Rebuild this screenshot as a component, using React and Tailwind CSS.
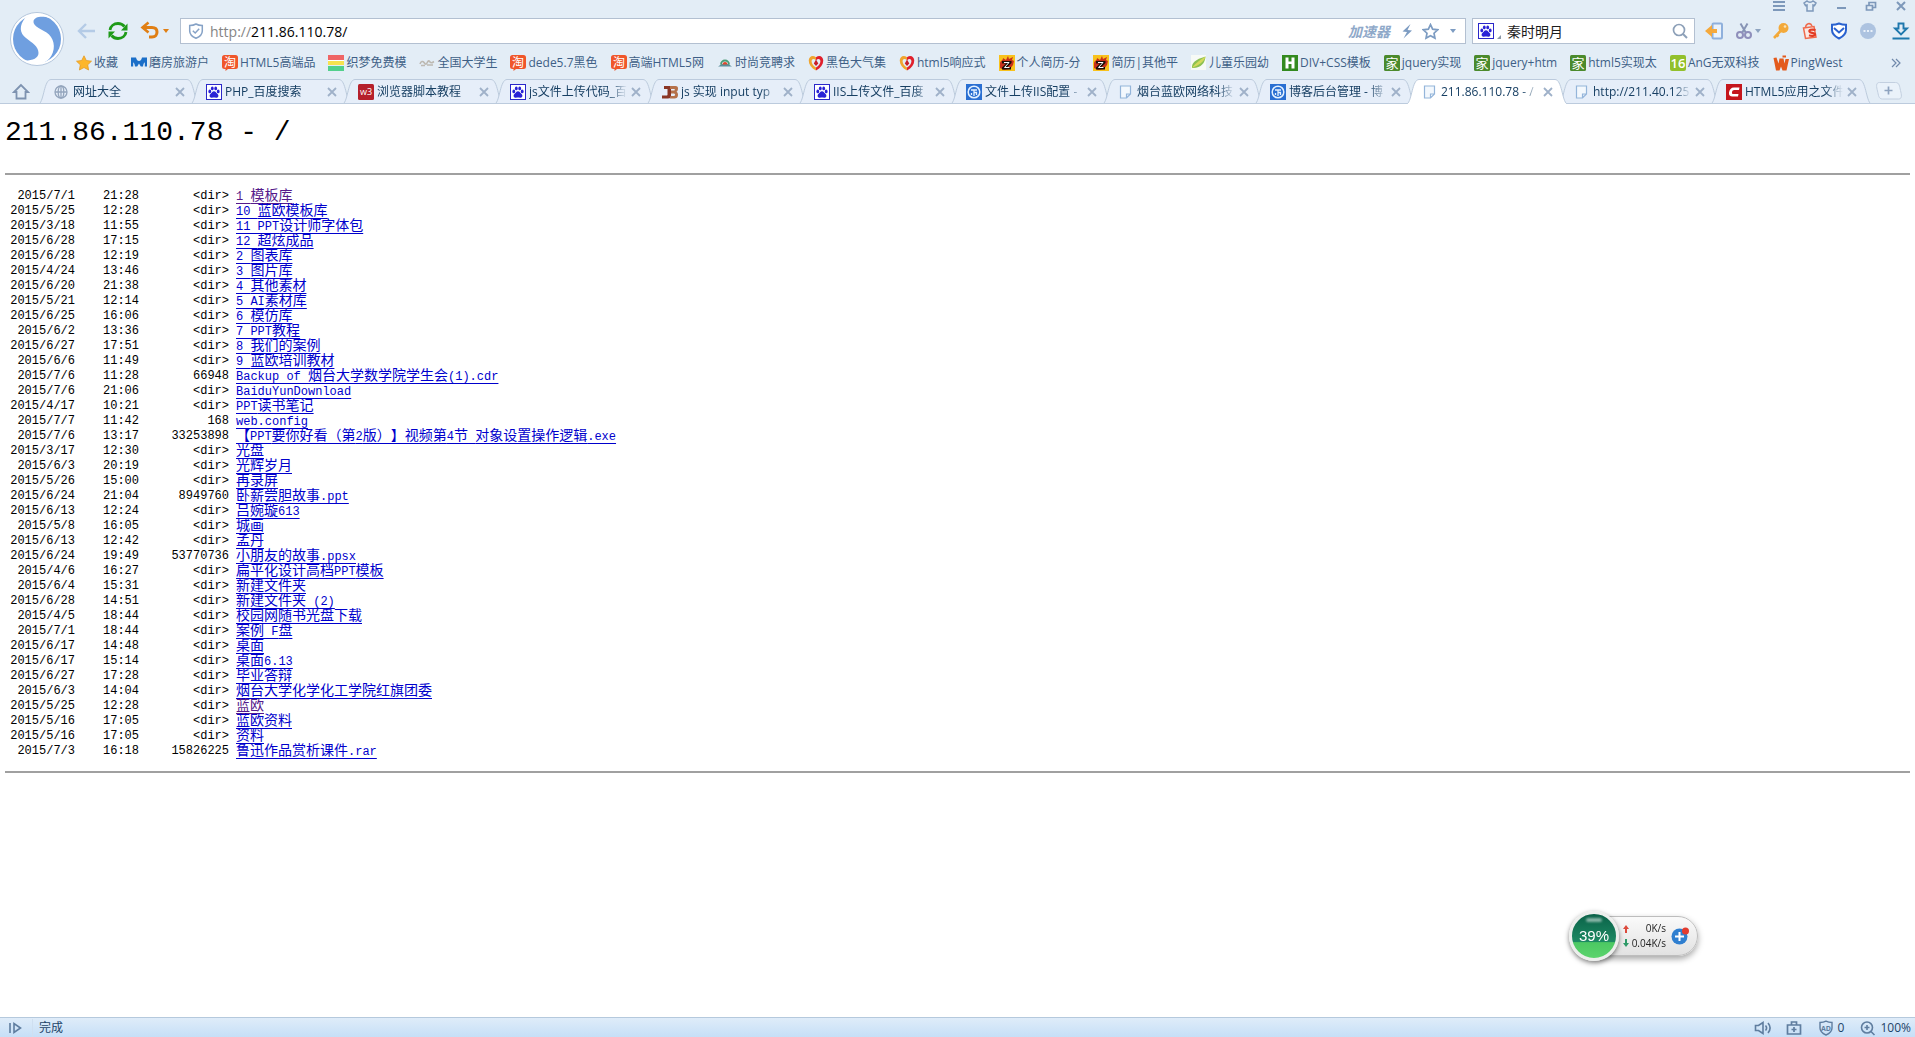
import clsx from 'clsx'

const BOOKMARKS = [
  { icon: 'star', label: '收藏' },
  { icon: 'mofang', label: '磨房旅游户' },
  { icon: 'tao', label: 'HTML5高端品' },
  { icon: 'rainbow', label: '织梦免费模' },
  { icon: 'grey', label: '全国大学生' },
  { icon: 'tao', label: 'dede5.7黑色' },
  { icon: 'tao', label: '高端HTML5网' },
  { icon: 'hat', label: '时尚竞聘求' },
  { icon: 'heart', label: '黑色大气集' },
  { icon: 'heart', label: 'html5响应式' },
  { icon: 'flame', label: '个人简历-分' },
  { icon: 'flame', label: '简历|其他平' },
  { icon: 'leaf', label: '儿童乐园幼' },
  { icon: 'h', label: 'DIV+CSS模板' },
  { icon: 'jia', label: 'jquery实现' },
  { icon: 'jia', label: 'jquery+htm' },
  { icon: 'jia', label: 'html5实现太' },
  { icon: 'sixteen', label: 'AnG无双科技' },
  { icon: 'ping', label: 'PingWest' },
]

const TABS = [
  { icon: 'globe', label: '网址大全' },
  { icon: 'paw', label: 'PHP_百度搜索' },
  { icon: 'w3', label: '浏览器脚本教程' },
  { icon: 'paw', label: 'js文件上传代码_百' },
  { icon: 'jb', label: 'js 实现 input typ' },
  { icon: 'paw', label: 'IIS上传文件_百度' },
  { icon: 'blog', label: '文件上传IIS配置 -' },
  { icon: 'page', label: '烟台蓝欧网络科技' },
  { icon: 'blog', label: '博客后台管理 - 博' },
  { icon: 'page', label: '211.86.110.78 - /', active: true },
  { icon: 'page', label: 'http://211.40.125' },
  { icon: 'c', label: 'HTML5应用之文件' },
]

// date, time, size, name, visited
const FILES = [
  ['2015/7/1', '21:28', '<dir>', '1 模板库', true],
  ['2015/5/25', '12:28', '<dir>', '10 蓝欧模板库'],
  ['2015/3/18', '11:55', '<dir>', '11 PPT设计师字体包'],
  ['2015/6/28', '17:15', '<dir>', '12 超炫成品'],
  ['2015/6/28', '12:19', '<dir>', '2 图表库'],
  ['2015/4/24', '13:46', '<dir>', '3 图片库'],
  ['2015/6/20', '21:38', '<dir>', '4 其他素材'],
  ['2015/5/21', '12:14', '<dir>', '5 AI素材库'],
  ['2015/6/25', '16:06', '<dir>', '6 模仿库'],
  ['2015/6/2', '13:36', '<dir>', '7 PPT教程'],
  ['2015/6/27', '17:51', '<dir>', '8 我们的案例'],
  ['2015/6/6', '11:49', '<dir>', '9 蓝欧培训教材'],
  ['2015/7/6', '11:28', '66948', 'Backup of 烟台大学数学院学生会(1).cdr'],
  ['2015/7/6', '21:06', '<dir>', 'BaiduYunDownload'],
  ['2015/4/17', '10:21', '<dir>', 'PPT读书笔记'],
  ['2015/7/7', '11:42', '168', 'web.config'],
  ['2015/7/6', '13:17', '33253898', '【PPT要你好看（第2版）】视频第4节 对象设置操作逻辑.exe'],
  ['2015/3/17', '12:30', '<dir>', '光盘'],
  ['2015/6/3', '20:19', '<dir>', '光辉岁月'],
  ['2015/5/26', '15:00', '<dir>', '再录屏'],
  ['2015/6/24', '21:04', '8949760', '卧薪尝胆故事.ppt'],
  ['2015/6/13', '12:24', '<dir>', '吕婉璇613'],
  ['2015/5/8', '16:05', '<dir>', '城画'],
  ['2015/6/13', '12:42', '<dir>', '孟丹'],
  ['2015/6/24', '19:49', '53770736', '小朋友的故事.ppsx'],
  ['2015/4/6', '16:27', '<dir>', '扁平化设计高档PPT模板'],
  ['2015/6/4', '15:31', '<dir>', '新建文件夹'],
  ['2015/6/28', '14:51', '<dir>', '新建文件夹 (2)'],
  ['2015/4/5', '18:44', '<dir>', '校园网随书光盘下载'],
  ['2015/7/1', '18:44', '<dir>', '案例 F盘'],
  ['2015/6/17', '14:48', '<dir>', '桌面'],
  ['2015/6/17', '15:14', '<dir>', '桌面6.13'],
  ['2015/6/27', '17:28', '<dir>', '毕业答辩'],
  ['2015/6/3', '14:04', '<dir>', '烟台大学化学化工学院红旗团委'],
  ['2015/5/25', '12:28', '<dir>', '蓝欧', true],
  ['2015/5/16', '17:05', '<dir>', '蓝欧资料'],
  ['2015/5/16', '17:05', '<dir>', '资料'],
  ['2015/7/3', '16:18', '15826225', '鲁迅作品赏析课件.rar'],
]

function Paw() {
  return (
    <>
      <rect x="0.5" y="0.5" width="15" height="15" fill="#fff" stroke="#2b27c9" />
      <g fill="#2a22d6">
        <ellipse cx="3.8" cy="7.4" rx="1.4" ry="1.9" />
        <ellipse cx="6.3" cy="4.4" rx="1.4" ry="1.9" />
        <ellipse cx="9.7" cy="4.4" rx="1.4" ry="1.9" />
        <ellipse cx="12.2" cy="7.4" rx="1.4" ry="1.9" />
        <path d="M8 7.2c1.6 0 2 1.4 3.1 2.4 1.2 1 1.6 2 1.1 3.1-.6 1.3-2.4.9-4.2.9s-3.6.4-4.2-.9c-.5-1.1-.1-2.1 1.1-3.1C6 8.600 6.400 7.200 8 7.200z" />
      </g>
    </>
  )
}

const FAVICONS = {
  star: (
    <path d="M8 0.800l2.300 4.700 5.200.7-3.800 3.600.9 5.200L8 12.500 3.400 15l.9-5.200L.5 6.200l5.200-.7z" fill="#fdb62b" stroke="#e59a25" strokeWidth="0.800" />
  ),
  mofang: (
    <path d="M0 2.500h5C5.500 5 6.700 6 8 6s2.500-1 3-3.500H16v9h-2.200V7.300c-1 .9-1.500 1.900-1.800 4.200H9.800L8 8.500l-1.800 3H4c-.3-2.300-.8-3.300-1.800-4.200v4.200H0z" fill="#1b6fc8" />
  ),
  tao: (
    <>
      <path d="M2.500 0h11A2.500 2.500 0 0 1 16 2.500v9a2.500 2.500 0 0 1-2.500 2.500H6l-2.500 2v-2h-1A2.500 2.500 0 0 1 0 11.500v-9A2.500 2.500 0 0 1 2.500 0z" fill="#f0562a" />
      <text x="8" y="11.500" textAnchor="middle" fontSize="12" fill="#fff">淘</text>
    </>
  ),
  rainbow: (
    <>
      <rect width="16" height="5" y="0" fill="#ef6565" />
      <rect width="16" height="2" y="5" fill="#fff" />
      <rect width="16" height="4" y="6" fill="#f7e24f" />
      <rect width="16" height="5" y="11" fill="#52d08c" />
    </>
  ),
  grey: (
    <path d="M1 9c1-3 3-3 4-1.500S7 10 8 8s1.500-3 3-1 3 0 4-.5M2 10.500h4M8 10h6" fill="none" stroke="#bdb9b2" strokeWidth="1.600" />
  ),
  hat: (
    <>
      <path d="M1 11.500c2-1 2.500-2 3.500-2.500h7c1 .5 1.500 1.500 3.500 2.500z" fill="#5b8f9b" />
      <path d="M4 9.500a4 4 0 0 1 8 0" fill="none" stroke="#4b9c77" strokeWidth="1.800" />
      <path d="M5.500 9.500a2.500 2.500 0 0 1 5 0z" fill="#e0492d" />
    </>
  ),
  heart: (
    <>
      <path d="M8 15.500C3 12.500.5 9 .8 5 1 1.500 4.500-.5 8 2.200v3C5.500 3 3.800 4 3.600 6c-.1 2.500 1.700 4.800 4.400 6.600z" fill="#f0a52e" />
      <path d="M8 15.500c5-3 7.500-6.500 7.200-10.500C15 1.500 11.500-.5 8 2.200v3c2.500-2.200 4.200-1.200 4.400.8.1 2.500-1.700 4.800-4.400 6.600z" fill="#e0202c" />
      <path d="M8 4.500l2.300 4L8 11 5.800 8.500z" fill="#c81e28" />
    </>
  ),
  flame: (
    <>
      <rect width="16" height="16" fill="#f8c21c" />
      <path d="M1 9c0-4 3-3 3-6l3 2 2-4 1 3 4-2-1 3 2 1-1 4-3 4-6 1-4-2z" fill="#c9301a" />
      <path d="M3 6h9.500v2L8.500 12H12v2.500H3v-2L7 8.500H3z" fill="#1d0f08" />
      <path d="M5 7.500h5L5.500 12.500h5" fill="none" stroke="#fff" strokeWidth="1" />
    </>
  ),
  leaf: (
    <>
      <path d="M0 0h15v15H0z" fill="#f7faf6" />
      <path d="M1 13c-.5-5 3-8.500 13.500-11.500C14 8 10 13.500 1 13z" fill="#8cc152" />
      <path d="M1 13C3.500 9 7 6.500 14.500 1.500 13 7 8 10 1 13z" fill="#d3d95b" />
    </>
  ),
  h: (
    <>
      <rect width="16" height="16" fill="#338a1f" />
      <path d="M3.500 2.500h3v4h3v-4h3v11h-3v-4.500h-3v4.500h-3z" fill="#fff" />
    </>
  ),
  jia: (
    <>
      <rect width="16" height="16" rx="1.500" fill="#4b8a2c" />
      <text x="8" y="12.500" textAnchor="middle" fontSize="13" fill="#fff">家</text>
    </>
  ),
  sixteen: (
    <>
      <rect width="16" height="16" rx="2" fill="#92c02c" />
      <text x="8" y="13" textAnchor="middle" fontSize="13" fontWeight="600" fill="#fff">16</text>
    </>
  ),
  ping: (
    <path d="M.5 3l3-.5 2 6 1-5h4l1 5 1-4.500H16L13.500 15.500H9.500L8 11.500 6.500 15.500H3zM9.500 .5h3.500v2H9.500z" fill="#e35a1c" />
  ),
  globe: (
    <g fill="none" stroke="#94a5bd" strokeWidth="1.300">
      <circle cx="7" cy="8" r="6" />
      <ellipse cx="7" cy="8" rx="2.800" ry="6" />
      <path d="M1 8h12M7 2v12" />
    </g>
  ),
  paw: <Paw />,
  w3: (
    <>
      <rect width="16" height="16" rx="1.500" fill="#b5202b" />
      <text x="8" y="11" textAnchor="middle" fontSize="9" fill="#fff">w3</text>
    </>
  ),
  jb: (
    <>
      <path d="M2 2h7v9.500a3 3 0 0 1-3 3H0v-3h4.500c.8 0 1-.2 1-1V5H2z" fill="#8a3524" />
      <path d="M8 2h5.500c2 0 2.500 1 2.500 2.500S15.500 7 14.500 7.800C15.500 8.300 16 9.500 16 11c0 2.500-1.500 3.500-3.500 3.500H7.500L9 12h3c1.500 0 1.500-2.500 0-2.500H9v-3h3C13.200 6.500 13.200 5 12 5H8z" fill="#b5714a" />
    </>
  ),
  blog: (
    <>
      <rect width="16" height="16" fill="#2a6fd2" />
      <circle cx="8" cy="8" r="5.800" fill="none" stroke="#e4f1ff" strokeWidth="1.500" />
      <path d="M5 6h6M8 6v6M5.500 9v2M8 8.500h2.500V11" fill="none" stroke="#e4f1ff" strokeWidth="1.300" />
    </>
  ),
  page: (
    <path d="M2.500 2h10v8L8.500 14h-6zM12.500 10h-4v4" fill="#f3f8fd" stroke="#94b5da" strokeWidth="1.200" />
  ),
  c: (
    <>
      <rect width="16" height="16" fill="#c5161d" />
      <path d="M13.500 3.500H8C5 3.500 3.500 5.500 3 8.500c-.4 2.800 1 4 3.500 4h5.500l.5-2.500H7.500c-1.200 0-1.700-.5-1.500-1.800.2-1.500 1-2.200 2.300-2.200H13z" fill="#fff" />
    </>
  ),
}

function Favicon({ name }) {
  return (
    <svg viewBox="0 0 16 16" className="w-4 h-4 shrink-0" aria-hidden="true">
      {FAVICONS[name]}
    </svg>
  )
}

function Caret({ className }) {
  return (
    <svg viewBox="0 0 8 8" className={clsx('w-2 h-2 shrink-0', className)}>
      <path d="M1 2h6L4 6z" fill="currentColor" />
    </svg>
  )
}

function IconButton({ label, className, viewBox = '0 0 20 20', children }) {
  return (
    <button type="button" aria-label={label} className={clsx('shrink-0', className)}>
      <svg viewBox={viewBox} className="w-full h-full" fill="none">
        {children}
      </svg>
    </button>
  )
}

function WindowControls() {
  return (
    <div className="flex justify-end items-start h-[18px] gap-[18px] pr-2 text-[#7d98ba]">
      <IconButton label="菜单" className="w-3 h-3" viewBox="0 0 12 12">
        <path d="M0 2h12M0 6h12M0 10h12" stroke="currentColor" strokeWidth="1.800" />
      </IconButton>
      <IconButton label="皮肤" className="w-3.5 h-3" viewBox="0 0 14 12">
        <path d="M1 3l3-2c1.500 1.500 4.500 1.500 6 0l3 2-1.500 2.500-1.500-.5v6H4V5l-1.500.5z" stroke="currentColor" strokeWidth="1.500" />
      </IconButton>
      <IconButton label="最小化" className="w-3 h-3" viewBox="0 0 12 12">
        <path d="M2 8h9" stroke="currentColor" strokeWidth="2" />
      </IconButton>
      <IconButton label="还原" className="w-3 h-3" viewBox="0 0 12 12">
        <path d="M1.500 5.500h6v4.500h-6zM4 5V2.500h6.500V7.500H8" stroke="currentColor" strokeWidth="1.700" />
      </IconButton>
      <IconButton label="关闭" className="w-3 h-3" viewBox="0 0 12 12">
        <path d="M2 2l8 8M10 2l-8 8" stroke="currentColor" strokeWidth="2" />
      </IconButton>
    </div>
  )
}

function Logo() {
  return (
    <svg viewBox="0 0 54 54" className="w-[54px] h-[54px]">
      <circle cx="27" cy="27" r="26.500" fill="#fff" stroke="#b4c6dc" />
      <circle cx="27" cy="27" r="24" fill="#6f9fe0" />
      <path
        d="M15 6C9 14 9.500 21 16 26c6 5 12.500 8 12.500 15 0 5-5.500 7.500-13.500 7.500C22 54 33 53 39 47c7-8 6-18.500 0-24.500C33 17 22.500 15 23.500 9 24.500 4.500 32 3.500 40 6 33 0 22 0 15 6z"
        fill="#fff"
      />
    </svg>
  )
}

function NavButtons() {
  return (
    <div className="flex items-center gap-[11px] w-[104px] shrink-0">
      <IconButton label="后退" className="w-5 h-5">
        <path d="M19 10H3M10 3l-7 7 7 7" stroke="#b4cbe6" strokeWidth="2.400" />
      </IconButton>
      <IconButton label="刷新" className="w-[22px] h-5" viewBox="0 0 22 20">
        <path d="M3 9c.5-4 4-6.500 8-6.500 3 0 5 1.200 6.500 3M19 11c-.5 4-4 6.500-8 6.500-3 0-5-1.200-6.500-3" stroke="#1f9a18" strokeWidth="2.800" />
        <path d="M20.500 2.500v7H14zM1.500 17.500v-7H8z" fill="#1f9a18" />
      </IconButton>
      <div className="flex items-center gap-0.5">
        <IconButton label="撤销" className="w-5 h-5">
          <path d="M4 6.500h8c3.500 0 5 2 5 4.500s-1.500 5-5 5H9" stroke="#e07f14" strokeWidth="3" />
          <path d="M8.500 1.500L2.500 6.500l6 5" stroke="#e07f14" strokeWidth="2.600" />
        </IconButton>
        <Caret className="text-[#e07f14]" />
      </div>
    </div>
  )
}

function AddressBar() {
  return (
    <form className="flex flex-1 min-w-0 items-center h-[26px] pl-[7px] pr-2 bg-white border border-[#b3c0d1]">
      <svg viewBox="0 0 16 16" className="w-4 h-4 shrink-0" fill="none" stroke="#86a2c6" strokeWidth="1.500">
        <path d="M8 1c2 1.200 4 1.500 6.300 1.500V8c0 3.500-2.800 5.800-6.300 7.200C4.500 13.800 1.700 11.500 1.700 8V2.500C4 2.500 6 2.200 8 1z" />
        <path d="M4.800 7.800L7.200 10l4-4.200" />
      </svg>
      <label htmlFor="url" className="ml-1.5 text-[14px] text-[#858585]">
        http://
      </label>
      <input
        id="url"
        type="text"
        defaultValue="211.86.110.78/"
        className="flex-1 min-w-0 text-[14px] text-black bg-transparent outline-none"
      />
      <button type="button" className="mr-2.5 text-[14px] italic font-bold text-[#8fa9c9]">
        加速器
      </button>
      <IconButton label="极速模式" className="w-3.5 h-4 mr-2" viewBox="0 0 14 16">
        <path d="M10.500 1L2.500 8.500 7 9l-3.500 6.500L12 7.500 7.500 7z" fill="#7d9cc2" />
      </IconButton>
      <IconButton label="收藏网页" className="w-[17px] h-[17px] mr-2.5" viewBox="0 0 16 16">
        <path d="M8 1.500l2 4.300 4.700.6-3.400 3.200.9 4.600L8 12l-4.200 2.200.9-4.600L1.300 6.400 6 5.800z" stroke="#7d9cc2" strokeWidth="1.600" />
      </IconButton>
      <Caret className="text-[#7d9cc2]" />
    </form>
  )
}

function SearchBox() {
  return (
    <form className="flex items-center w-[223px] h-[26px] shrink-0 ml-1.5 px-[5px] bg-white border border-[#b3c0d1]">
      <Favicon name="paw" />
      <svg viewBox="0 0 4 4" className="w-1 h-1 ml-[3px] mt-3 shrink-0">
        <path d="M4 0v4H0z" fill="#8b97a6" />
      </svg>
      <input
        type="text"
        aria-label="搜索"
        defaultValue="秦时明月"
        className="flex-1 min-w-0 ml-1.5 text-[14px] text-[#1c1c1c] bg-transparent outline-none"
      />
      <IconButton label="搜索" className="w-4 h-4 mr-px" viewBox="0 0 16 16">
        <circle cx="7" cy="7" r="5.500" stroke="#8da0b8" strokeWidth="1.700" />
        <path d="M11 11l4 4" stroke="#8da0b8" strokeWidth="2" />
      </IconButton>
    </form>
  )
}

function Toolbar() {
  return (
    <div className="flex items-center shrink-0 gap-[9px] pl-2.5 pr-1">
      <IconButton label="手机" className="w-5 h-5">
        <rect x="7.500" y="2.500" width="9.500" height="15" rx="1" fill="#eaf2fb" stroke="#8fb0dc" strokeWidth="2" />
        <path d="M0 10l7-6v4h5v4H7v4z" fill="#f5a93c" />
      </IconButton>
      <div className="flex items-center">
        <IconButton label="截图" className="w-5 h-5">
          <path d="M6.500 2.500L12 12M13.500 2.500L8 12" stroke="#8794b5" strokeWidth="2" />
          <circle cx="6" cy="14" r="3" stroke="#8f8fbb" strokeWidth="2" />
          <circle cx="14" cy="14" r="3" stroke="#8f8fbb" strokeWidth="2" />
        </IconButton>
        <Caret className="text-[#8da3c0]" />
      </div>
      <IconButton label="密码" className="w-5 h-5">
        <circle cx="12.500" cy="7" r="5" fill="#f3a93a" />
        <circle cx="14" cy="5.500" r="1.300" fill="#fbe3b5" />
        <path d="M9.500 10L3 17M5.500 13.500l2 2" stroke="#f3a93a" strokeWidth="2.600" />
      </IconButton>
      <IconButton label="购物" className="w-5 h-5">
        <path d="M3.500 7l10.500-1.500 2 10.500-10.500 1.500z" fill="#fbe9e4" stroke="#ef6b4d" strokeWidth="1.500" />
        <path d="M5.500 7c0-4.500 5-6 6.500-2" stroke="#ef6b4d" strokeWidth="1.500" />
        <path d="M15.500 9c-4.500-1.200-6.500.2-6 1.700s5.500.8 5.500 2.600-3.500 1.900-6 1" stroke="#e23c24" strokeWidth="2.200" />
      </IconButton>
      <IconButton label="安全" className="w-5 h-5">
        <path d="M10 2.500c2.500 1 4.500 1.300 7 1.300V9c0 4-3 6.500-7 8.500-4-2-7-4.500-7-8.500V3.800c2.500 0 4.500-.3 7-1.300z" fill="#fff" stroke="#2a62cf" strokeWidth="2" />
        <path d="M5 7l5 4.500L15 7" stroke="#2a62cf" strokeWidth="2" />
      </IconButton>
      <IconButton label="更多" className="w-5 h-5">
        <circle cx="10" cy="10" r="8" fill="#adc3e0" />
        <path d="M5.500 10h2M9 10h2M12.500 10h2" stroke="#e9f1fa" strokeWidth="2" />
      </IconButton>
      <IconButton label="下载" className="w-5 h-5 ml-1">
        <path d="M7.500 2.500h5v5h3.500L10 13.500 4 7.500h3.500z" stroke="#1f78ad" strokeWidth="1.900" />
        <path d="M1.500 17.500h17" stroke="#1f78ad" strokeWidth="2" />
      </IconButton>
    </div>
  )
}

function BookmarkBar() {
  return (
    <nav className="flex items-center h-[35px] gap-[13px] pt-0.5 pr-3.5 text-[12px] text-[#3e5f86] whitespace-nowrap overflow-hidden">
      {BOOKMARKS.map((b, i) => (
        <a key={i} href="#" className="flex items-center gap-0.5 shrink-0">
          <Favicon name={b.icon} />
          {b.label}
        </a>
      ))}
      <IconButton label="更多收藏" className="w-2.5 h-2.5 ml-auto" viewBox="0 0 10 10">
        <path d="M1 1l4 4-4 4M5 1l4 4-4 4" stroke="#7089ab" strokeWidth="1.200" />
      </IconButton>
    </nav>
  )
}

function Tab({ icon, label, active }) {
  return (
    <div className={clsx('relative w-[160px] min-w-0 h-[25px] -mr-2', active && 'z-10')}>
      <svg viewBox="0 0 160 25" preserveAspectRatio="none" className="absolute inset-0 w-full h-full">
        <path
          d="M0 25C5 22 5 .5 12 .5H148C155 .5 155 22 160 25"
          fill={active ? '#ffffff' : '#e6eef9'}
          stroke="#bccbdd"
        />
        {!active && <path d="M0 24.500h160" stroke="#bccbdd" />}
      </svg>
      <div className="relative flex items-center h-full pl-[15px] pr-3">
        <Favicon name={icon} />
        <button
          type="button"
          className="flex-1 min-w-0 ml-[3px] text-left text-[12px] text-[#173f63] whitespace-nowrap overflow-hidden [mask-image:linear-gradient(to_right,#000_82%,transparent)]"
        >
          {label}
        </button>
        <IconButton label="关闭标签" className="w-3.5 h-3.5 ml-0.5" viewBox="0 0 14 14">
          <path d="M3 3l8 8M11 3l-8 8" stroke="#9fb1c9" strokeWidth="1.800" />
        </IconButton>
      </div>
    </div>
  )
}

function TabBar() {
  return (
    <div className="flex h-[25px] bg-[linear-gradient(to_top,#bccbdd_1px,transparent_1px)]">
      <div className="flex items-center w-[39px] shrink-0 pl-3">
        <IconButton label="主页" className="w-[18px] h-[18px]" viewBox="0 0 18 18">
          <path d="M9 2L2 9h2.500v6.500h9V9H16z" stroke="#7e93b0" strokeWidth="1.800" />
        </IconButton>
      </div>
      {TABS.map((tab, i) => (
        <Tab key={i} {...tab} />
      ))}
      <IconButton label="新建标签" className="w-[30px] h-[18px] mt-[3px] ml-3" viewBox="0 0 30 18">
        <path d="M4.500 .5h16c4 0 4 4 5 8s2 8.500-2 8.500h-16c-4 0-4-4-5-8s-2-8.500 2-8.500z" fill="#eaf2fa" stroke="#c3d0e0" />
        <path d="M13.500 4.500v8M9.500 8.500h8" stroke="#8ea3bf" strokeWidth="1.700" />
      </IconButton>
    </div>
  )
}

/**
 * FileName - half-width runs get a smaller monospace face so that two
 * latin letters take the room of one Chinese character
 */
function FileName({ text }) {
  return text.split(/([\x20-\x7e]+)/).map((part, i) =>
    i % 2 ? (
      <span key={i} className="text-[12px] leading-none">
        {part}
      </span>
    ) : (
      part
    )
  )
}

function DirectoryListing() {
  return (
    <main className="flex-1 px-[5px] bg-white text-black font-['Liberation_Mono','Noto_Sans_CJK_SC',monospace]">
      <h1 className="pt-3 pb-6 text-[28px] leading-[33px]">211.86.110.78 - /</h1>
      <hr className="border-t-2 border-[#a0a0a0]" />
      <table className="mt-[14px] mb-3 border-collapse text-[14px] leading-[15px] whitespace-pre [text-spacing-trim:space-all]">
        <tbody>
          {FILES.map(([date, time, size, name, visited]) => (
            <tr key={name}>
              <td className="w-[70px] p-0 text-right text-[12px] leading-[15px]">{date}</td>
              <td className="w-16 p-0 text-right text-[12px] leading-[15px]">{time}</td>
              <td className="w-[90px] p-0 text-right text-[12px] leading-[15px]">{size}</td>
              <td className="p-0 pl-[7px]">
                <a
                  href="#"
                  className={clsx(
                    'underline decoration-1 underline-offset-3 [text-decoration-skip-ink:none]',
                    visited ? 'text-[#551a8b]' : 'text-[#0000cc]'
                  )}
                >
                  <FileName text={name} />
                </a>
              </td>
            </tr>
          ))}
        </tbody>
      </table>
      <hr className="border-t-2 border-[#a0a0a0]" />
    </main>
  )
}

/* Floating memory and network meter */
function SpeedMeter() {
  return (
    <aside className="fixed right-[217px] bottom-[76px] flex items-center text-[#222]">
      <div className="relative z-10 flex items-center justify-center w-[50px] h-[50px] rounded-full bg-[linear-gradient(#0a6148_0%,#1d8a63_63%,#4cc863_65%,#5bd46c_100%)] border-[3px] border-[#eceeec] shadow-[0_2px_5px_rgba(0,0,0,0.5)]">
        <span className="absolute top-1 w-4 h-1 rounded-full bg-white/50 blur-[1px]" />
        <span className="text-[15px] text-white font-['Liberation_Sans',sans-serif]">39%</span>
      </div>
      <div className="flex items-center h-10 -ml-6 pl-[26px] pr-2 rounded-r-full border border-[#bdbdbd] bg-linear-to-b from-[#fafafa] to-[#e2e2e2] shadow-[0_3px_6px_rgba(0,0,0,0.35)]">
        <svg viewBox="0 0 8 26" className="w-2 h-[26px]">
          <path d="M4 2l3 4H5v4H3V6H1z" fill="#dc4a3c" />
          <path d="M4 24l3-4H5v-4H3v4H1z" fill="#2f9a68" />
        </svg>
        <div className="flex flex-col items-end w-9 text-[10px] leading-[15px] whitespace-nowrap">
          <span>0K/s</span>
          <span>0.04K/s</span>
        </div>
        <IconButton label="加速" className="w-[18px] h-[18px] ml-[5px]" viewBox="0 0 18 18">
          <circle cx="8.500" cy="9.500" r="8" fill="#2f7fd0" />
          <path d="M8.500 5v9M4 9.500h9" stroke="#fff" strokeWidth="2" />
          <circle cx="14.500" cy="4" r="3.500" fill="#e33b2e" />
        </IconButton>
      </div>
    </aside>
  )
}

function StatusBar() {
  return (
    <footer className="flex items-center h-5 pl-2 pr-1 border-t border-[#b5c9dd] bg-linear-to-b from-[#dfecf9] to-[#c6dff7] text-[12px] text-[#1e4468]">
      <IconButton label="侧边栏" className="w-3.5 h-3.5" viewBox="0 0 14 14">
        <path d="M2 2v10M6 2.500v9L12.500 7z" stroke="#5f7d9f" strokeWidth="1.600" />
      </IconButton>
      <span className="ml-2.5 pl-1.5 border-l border-[#cfdff0]">完成</span>
      <div className="flex items-center ml-auto">
        <IconButton label="声音" className="w-[18px] h-4 mr-[14px]" viewBox="0 0 18 16">
          <path d="M1.500 5.500h3L9 2.500v11l-4.500-3h-3zM11.500 5.500c1.300 1.500 1.300 3.500 0 5M14 3c2.500 3 2.500 7 0 10" stroke="#5f7d9f" strokeWidth="1.600" />
        </IconButton>
        <IconButton label="修复" className="w-4 h-4 mr-4" viewBox="0 0 16 16">
          <path d="M1.500 5h13v9h-13zM5.500 5V2h5v3M8 7v5M5.500 9.500h5" stroke="#5f7d9f" strokeWidth="1.700" />
        </IconButton>
        <button type="button" className="flex items-center gap-1 mr-4">
          <svg viewBox="0 0 16 16" className="w-4 h-4" fill="none" stroke="#5f7d9f" strokeWidth="1.400">
            <path d="M8 1.200c2 1 4 1.300 6 1.300V8c0 3.500-2.500 5.500-6 7-3.500-1.500-6-3.500-6-7V2.500c2 0 4-.3 6-1.300z" />
            <text x="8" y="10.500" textAnchor="middle" fontSize="7" fontWeight="700" fill="#5f7d9f" stroke="none">AD</text>
          </svg>
          0
        </button>
        <button type="button" className="flex items-center gap-1">
          <svg viewBox="0 0 16 16" className="w-4 h-4" fill="none" stroke="#5f7d9f" strokeWidth="1.600">
            <circle cx="7" cy="7.500" r="5.500" />
            <path d="M11 11.500l3.500 3.500M7 5v5M4.500 7.500h5" />
          </svg>
          100%
        </button>
      </div>
    </footer>
  )
}

export default function App() {
  return (
    <div className="min-h-screen flex flex-col font-['Open_Sans','Noto_Sans_CJK_SC',sans-serif]">
      <header className="bg-[#e3edf6]">
        <div className="flex">
          <div className="w-[76px] shrink-0 pl-2.5 pt-3">
            <Logo />
          </div>
          <div className="flex-1 min-w-0">
            <WindowControls />
            <div className="flex items-center">
              <NavButtons />
              <AddressBar />
              <SearchBox />
              <Toolbar />
            </div>
            <BookmarkBar />
          </div>
        </div>
        <TabBar />
      </header>
      <DirectoryListing />
      <StatusBar />
      <SpeedMeter />
    </div>
  )
}
